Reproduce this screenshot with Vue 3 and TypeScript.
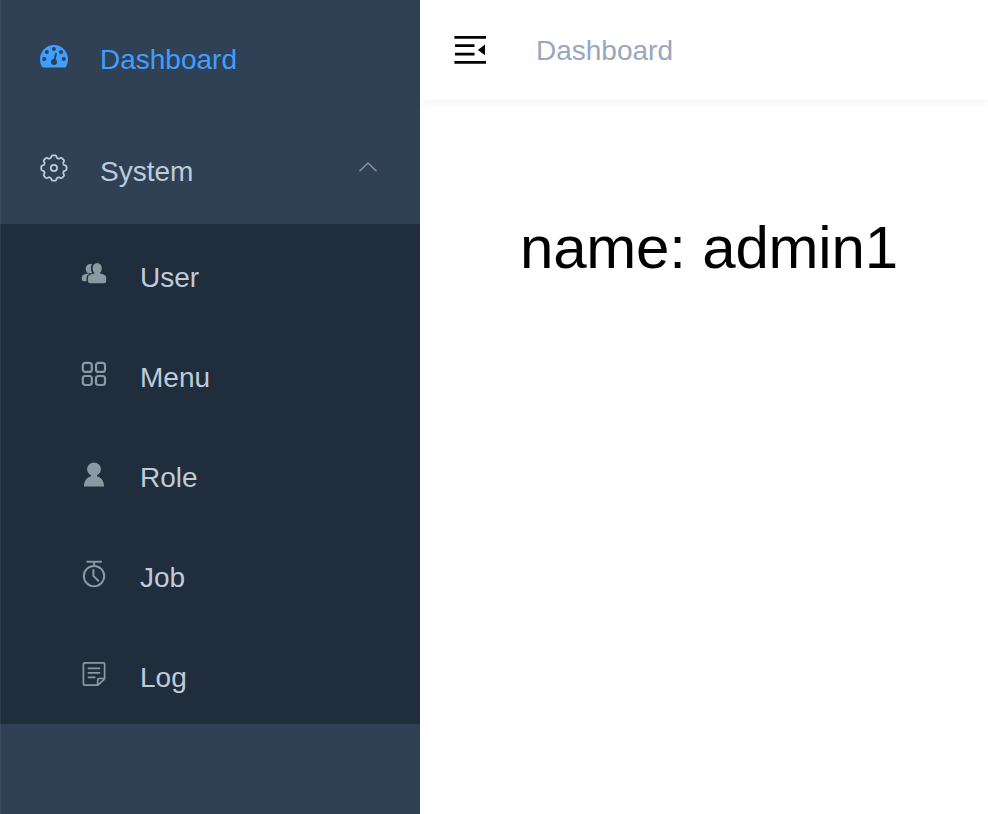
<script setup lang="ts">
interface SubItem {
  key: string
  label: string
}

const subItems: SubItem[] = [
  { key: 'user', label: 'User' },
  { key: 'menu', label: 'Menu' },
  { key: 'role', label: 'Role' },
  { key: 'job', label: 'Job' },
  { key: 'log', label: 'Log' },
]

// Eight-lobed gear outline, sampled around the circle
function gearOutline(cx: number, cy: number): string {
  const points: string[] = []
  for (let i = 0; i < 192; i++) {
    const a = (i / 192) * Math.PI * 2
    const wave = Math.tanh(2.2 * (Math.cos(8 * a) + 0.25))
    const r = 11.5 + 1.2 * wave
    points.push(`${(cx + r * Math.cos(a)).toFixed(2)} ${(cy + r * Math.sin(a)).toFixed(2)}`)
  }
  return `M${points.join('L')}Z`
}

const gearPath = gearOutline(13.9, 14)
</script>

<template>
  <div class="layout">
    <aside class="sidebar">
      <a class="item active">
        <svg class="icon" viewBox="0 0 28 28">
          <path
            fill="currentColor"
            d="M2.2 25C.8 22.8 0 20 0 17.2C0 9.3 6.2 3 14 3S28 9.3 28 17.2C28 20 27.2 22.8 25.8 25Q25.5 25.4 25 25.4H3Q2.5 25.4 2.2 25Z"
          />
          <g class="gauge-cut">
            <circle cx="4.2" cy="17" r="2" />
            <circle cx="6.9" cy="9.9" r="2" />
            <circle cx="13.9" cy="7" r="2" />
            <circle cx="21" cy="9.9" r="2" />
            <circle cx="23.8" cy="17" r="2" />
            <circle cx="14" cy="20" r="3" />
            <path d="M15.2 11.2Q16.2 10.2 17 11.6L15.3 19H13.1Z" />
          </g>
        </svg>
        <span class="label">Dashboard</span>
      </a>
      <a class="item">
        <svg class="icon" viewBox="0 0 28 28" fill="none" stroke="currentColor">
          <path :d="gearPath" stroke-width="1.8" stroke-linejoin="round" />
          <circle cx="13.9" cy="14" r="3.1" stroke-width="1.8" />
        </svg>
        <span class="label">System</span>
        <svg class="arrow" viewBox="0 0 24 24">
          <path d="M3.5 15.2L12 7L20.500 15.2" />
        </svg>
      </a>
      <nav class="submenu">
        <a v-for="item in subItems" :key="item.key" class="item sub">
          <svg class="icon" viewBox="0 0 28 28">
            <g v-if="item.key === 'user'" fill="currentColor">
              <ellipse cx="17.2" cy="8.4" rx="4.6" ry="5.4" />
              <path d="M14.5 12H19.9V13.6C24 14.2 26.200 15.200 26.200 18V20.800Q26.200 23.300 23.700 23.300H10.300Q7.900 23.300 7.900 20.800V18C7.900 15.200 10.500 14.200 14.500 13.600Z" />
              <path d="M11.9 4C8.4 3.500 5.700 5.500 5.700 8.800C5.700 10.800 6.500 12.600 7.900 13.200H11.300L12.100 12.700C10.600 10.200 10.600 6.500 11.900 4Z" />
              <path d="M8.100 13.700C4 13.900 1.800 15 1.800 17.500V19.400Q1.800 21.200 3.700 21.200H6.500V17.900C6.500 15.800 7.900 14.500 10 13.700Z" />
            </g>
            <g v-else-if="item.key === 'menu'" fill="none" stroke="currentColor" stroke-width="2.2">
              <rect x="2.8" y="2.9" width="9" height="9" rx="2.5" />
              <rect x="16" y="2.9" width="9" height="9" rx="2.5" />
              <rect x="2.8" y="16" width="9" height="9" rx="2.5" />
              <rect x="16" y="16" width="9" height="9" rx="2.5" />
            </g>
            <g v-else-if="item.key === 'role'" fill="currentColor">
              <ellipse cx="14" cy="9.2" rx="6.9" ry="6.8" />
              <path d="M11 14H17V16.2C21 17.3 24.1 20.8 24.1 26.6H3.900C3.900 20.800 7 17.300 11 16.200Z" />
            </g>
            <g v-else-if="item.key === 'job'" fill="none" stroke="currentColor" stroke-width="2">
              <path d="M6.500 1.700H21.800M14.100 1.700V5.500" />
              <circle cx="14" cy="16.100" r="10.200" />
              <path d="M13.400 10V15.900L18.300 20.800" stroke-linecap="round" stroke-linejoin="round" />
            </g>
            <g v-else fill="none" stroke="currentColor" stroke-width="1.700" stroke-linejoin="round">
              <path d="M4.500 2.900H23.500Q24.600 2.900 24.600 4V18.800L18 25.200H4.500Q3.400 25.200 3.400 24.100V4Q3.400 2.900 4.500 2.900Z" />
              <path d="M17.700 25V19.700Q17.700 18.500 18.900 18.500H24.500" />
              <path d="M8.400 8.300H19.500M8.400 12.800H19.500M8.400 17.300H14.800" stroke-linecap="round" />
            </g>
          </svg>
          <span class="label">{{ item.label }}</span>
        </a>
      </nav>
    </aside>

    <section class="main">
      <header class="navbar">
        <svg class="toggle" viewBox="0 0 32 32">
          <path d="M.4 2H32V4.700H.4ZM1 10.300H20.500V13H1ZM1 18.700H20.500V21.400H1ZM.4 27H32V29.700H.4ZM31 10.600V21.200L23.800 15.900Z" />
        </svg>
        <span class="crumb">Dashboard</span>
      </header>
      <main class="content">name: admin1</main>
    </section>
  </div>
</template>

<style>
body {
  margin: 0;
  background: #fff;
}
</style>

<style scoped>
.layout {
  display: flex;
  height: 814px;
  overflow: hidden;
  font-family: "Liberation Sans", Arial, sans-serif;
}

.sidebar {
  flex: none;
  width: 420px;
  box-sizing: border-box;
  background: #304156;
  box-shadow: inset 1px 0 #3c4b60;
}

.item {
  display: flex;
  align-items: center;
  box-sizing: border-box;
  height: 112px;
  padding: 0 40px;
  color: #bfcbd9;
  font-size: 28px;
}

.item.active {
  color: #409eff;
}

.icon {
  flex: none;
  width: 28px;
  height: 28px;
  margin-right: 32px;
}

.label {
  flex: 1;
  line-height: 32px;
  padding-top: 7px;
}

.gauge-cut {
  fill: #304156;
}

.arrow {
  width: 24px;
  height: 24px;
  fill: none;
  stroke: #909399;
  stroke-width: 1.5;
}

.submenu {
  background: #1f2d3d;
  box-shadow: inset 1px 0 #2d3a4a;
}

.item.sub {
  height: 100px;
  padding-left: 80px;
}

.sub .icon {
  color: #8c98a2;
}

.main {
  flex: 1;
  min-width: 0;
}

.navbar {
  display: flex;
  align-items: center;
  box-sizing: border-box;
  height: 100px;
  padding-left: 34px;
  box-shadow: 0 2px 8px rgba(0, 21, 41, 0.06);
}

.toggle {
  width: 32px;
  height: 32px;
  margin-right: 50px;
}

.crumb {
  padding-top: 2px;
  color: #97a8be;
  font-size: 28px;
  line-height: 32px;
}

.content {
  padding: 113px 0 0 100px;
  color: #000;
  font-size: 60px;
  line-height: 69px;
  letter-spacing: -0.2px;
}
</style>
